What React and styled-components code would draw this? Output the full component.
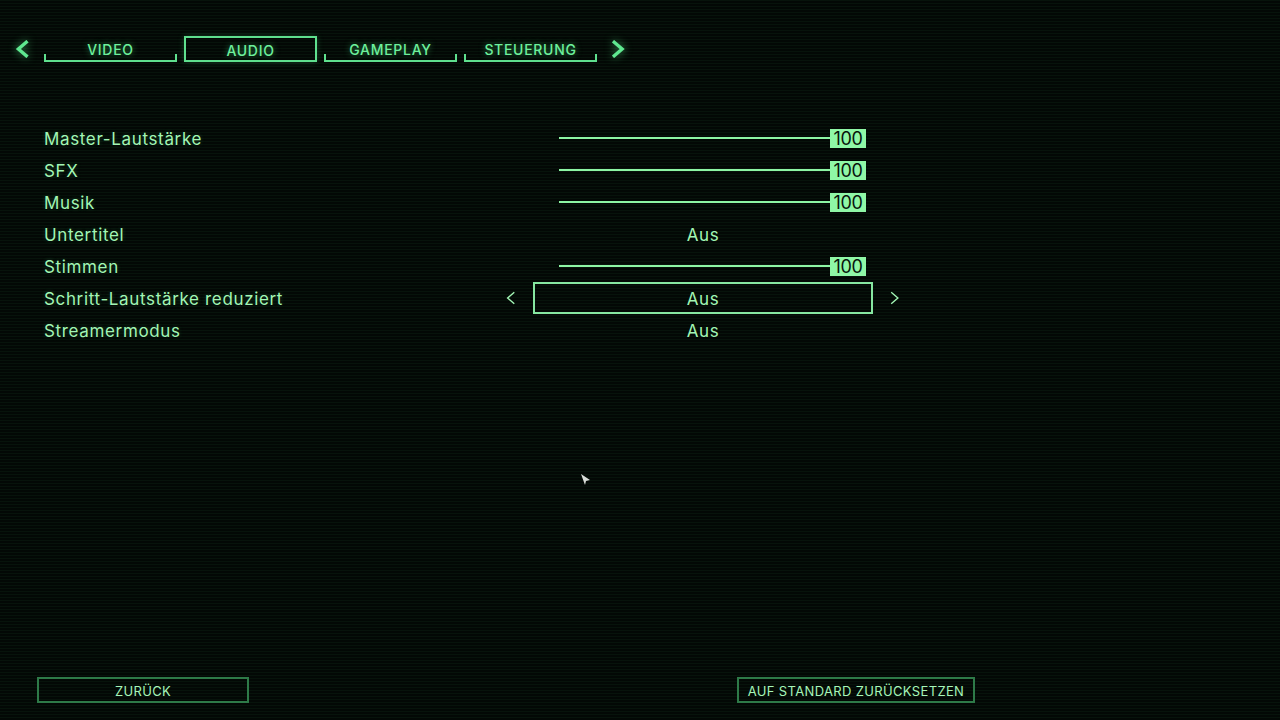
import React from 'react'
import styled, { createGlobalStyle } from 'styled-components'

const GlobalStyle = createGlobalStyle`
  html, body {
    margin: 0;
    padding: 0;
    height: 100%;
  }
  body {
    background-color: #040b06;
    font-family: Inter, "Noto Sans", sans-serif;
  }
`

const Screen = styled.div`
  position: relative;
  width: 1280px;
  height: 720px;
  box-sizing: border-box;
  display: flex;
  flex-direction: column;
  overflow: hidden;
  background: repeating-linear-gradient(
    to bottom,
    #07130b 0px,
    #07130b 1px,
    #030805 1px,
    #030805 3px
  );
`

const TabBar = styled.div`
  display: flex;
  align-items: center;
  gap: 7px;
  padding: 36px 0 0 14px;
  height: 26px;
`

const NavArrow = styled.button`
  width: 16px;
  height: 26px;
  padding: 0;
  border: none;
  background: none;
  display: flex;
  align-items: center;
  justify-content: center;
  margin: ${(p) => (p.$right ? '0 0 0 7px' : '0 7px 0 0')};
  filter: drop-shadow(0 0 4px rgba(90, 240, 140, 0.6));
`

const Tab = styled.div`
  position: relative;
  width: 133px;
  height: 26px;
  box-sizing: border-box;
  display: flex;
  align-items: center;
  justify-content: center;
  padding-top: 2px;
  font-size: 14px;
  font-weight: 500;
  letter-spacing: 0.7px;
  color: #6df09c;
  text-shadow: 0 0 6px rgba(80, 230, 130, 0.55);
  border: ${(p) => (p.$active ? '2px solid #5fe08e' : 'none')};
  border-bottom: 2px solid #5fe08e;
  box-shadow: ${(p) => (p.$active ? '0 0 6px rgba(80, 230, 130, 0.25)' : 'none')};

  &::after {
    content: '';
    display: ${(p) => (p.$active ? 'none' : 'block')};
    position: absolute;
    left: 0;
    right: 0;
    bottom: 0;
    height: 6px;
    border-left: 2px solid #5fe08e;
    border-right: 2px solid #5fe08e;
  }
`

const Settings = styled.div`
  display: flex;
  flex-direction: column;
  padding: 60px 0 0 44px;
`

const Row = styled.div`
  display: flex;
  align-items: center;
  height: 32px;
`

const Label = styled.div`
  width: 457px;
  padding-top: 1px;
  font-size: 17px;
  letter-spacing: 0.65px;
  color: #a2f6b4;
  text-shadow: 0 1px 1px rgba(0, 0, 0, 0.6), 0 0 4px rgba(100, 240, 150, 0.25);
`

const SideArrow = styled.div`
  width: 18px;
  height: 32px;
  display: flex;
  align-items: center;
  justify-content: center;
  visibility: ${(p) => (p.$show ? 'visible' : 'hidden')};
`

const ValueBox = styled.div`
  width: 340px;
  height: 32px;
  margin: 0 13px 0 14px;
  box-sizing: border-box;
  display: flex;
  align-items: center;
  justify-content: ${(p) => (p.$slider ? 'flex-start' : 'center')};
  padding-left: ${(p) => (p.$slider ? '24px' : '0')};
  padding-top: ${(p) => (p.$slider ? '0' : '1px')};
  border: 2px solid ${(p) => (p.$selected ? '#86e6a0' : 'transparent')};
  font-size: 17px;
  letter-spacing: 0.6px;
  color: #a2f6b4;
`

const Track = styled.div`
  width: 271px;
  height: 2px;
  background: #8df5a4;
`

const Number = styled.div`
  width: 36px;
  height: 19px;
  background: #8ff7a6;
  color: #08140c;
  font-size: 18px;
  line-height: 19px;
  text-align: center;
  letter-spacing: -0.3px;
`

const Footer = styled.div`
  margin-top: auto;
  display: flex;
  padding: 0 0 17px 37px;
  gap: 488px;
`

const FooterButton = styled.button`
  width: ${(p) => p.$width}px;
  height: 26px;
  box-sizing: border-box;
  border: 2px solid #2e7a48;
  background: transparent;
  color: #a6f5b8;
  font-family: Inter, "Noto Sans", sans-serif;
  font-size: 13px;
  letter-spacing: 0.35px;
  padding: 1px 0 0;
  display: flex;
  align-items: center;
  justify-content: center;
`

const Cursor = styled.svg`
  position: absolute;
  left: 580px;
  top: 473px;
`

const Chevron = ({ dir, size = 16, stroke = 3, color = '#5fe890' }) => (
  <svg width={size * 0.75} height={size} viewBox="0 0 12 16">
    <path
      d={dir === 'left' ? 'M10 2 L3 8 L10 14' : 'M2 2 L9 8 L2 14'}
      fill="none"
      stroke={color}
      strokeWidth={stroke}
      strokeLinecap="square"
    />
  </svg>
)

const tabs = ['VIDEO', 'AUDIO', 'GAMEPLAY', 'STEUERUNG']

const rows = [
  { label: 'Master-Lautstärke', slider: 100 },
  { label: 'SFX', slider: 100 },
  { label: 'Musik', slider: 100 },
  { label: 'Untertitel', value: 'Aus' },
  { label: 'Stimmen', slider: 100 },
  { label: 'Schritt-Lautstärke reduziert', value: 'Aus', selected: true },
  { label: 'Streamermodus', value: 'Aus' },
]

const App = () => (
  <>
    <GlobalStyle />
    <Screen>
      <TabBar>
        <NavArrow>
          <Chevron dir="left" size={18} />
        </NavArrow>
        {tabs.map((t) => (
          <Tab key={t} $active={t === 'AUDIO'}>
            {t}
          </Tab>
        ))}
        <NavArrow $right>
          <Chevron dir="right" size={18} />
        </NavArrow>
      </TabBar>

      <Settings>
        {rows.map((r) => (
          <Row key={r.label}>
            <Label>{r.label}</Label>
            <SideArrow $show={r.selected}>
              <Chevron dir="left" size={14} stroke={1.6} color="#a2f6b4" />
            </SideArrow>
            <ValueBox $slider={r.slider !== undefined} $selected={r.selected}>
              {r.slider !== undefined ? (
                <>
                  <Track />
                  <Number>{r.slider}</Number>
                </>
              ) : (
                r.value
              )}
            </ValueBox>
            <SideArrow $show={r.selected}>
              <Chevron dir="right" size={14} stroke={1.6} color="#a2f6b4" />
            </SideArrow>
          </Row>
        ))}
      </Settings>

      <Footer>
        <FooterButton $width={212}>ZURÜCK</FooterButton>
        <FooterButton $width={238}>AUF STANDARD ZURÜCKSETZEN</FooterButton>
      </Footer>

      <Cursor width="12" height="14" viewBox="0 0 12 14">
        <path d="M1 1 L10 7 L6 8 L5 12 Z" fill="#d8dcd8" />
      </Cursor>
    </Screen>
  </>
)

export default App
